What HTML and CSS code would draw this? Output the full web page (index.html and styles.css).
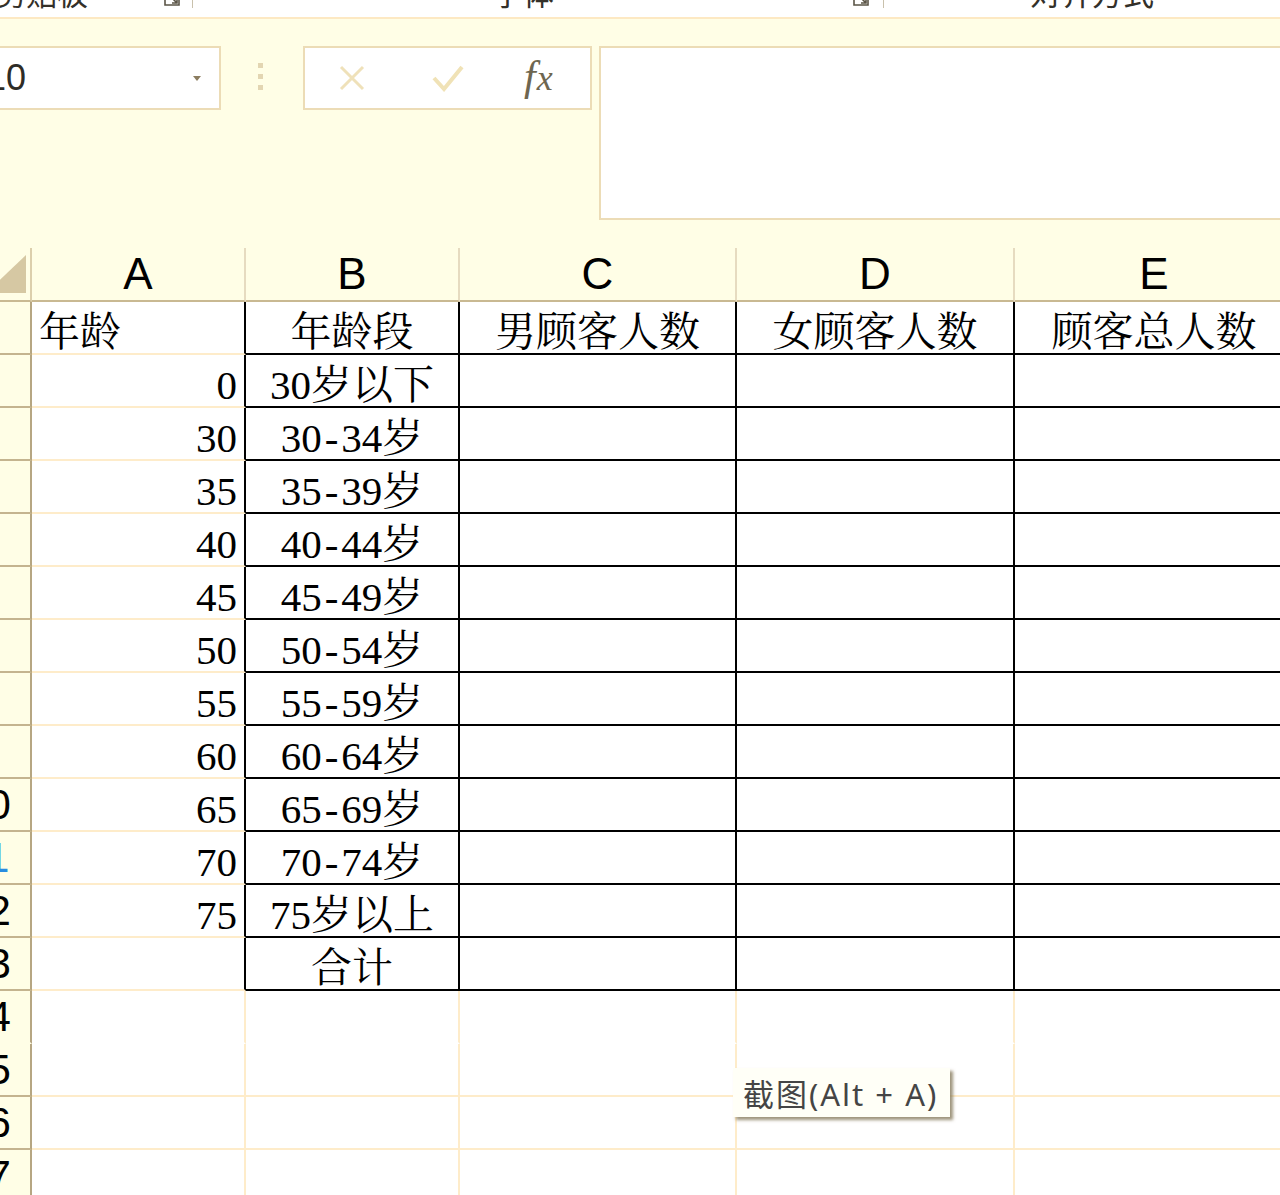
FILE: index.html
```html
<!DOCTYPE html>
<html lang="zh-CN">
<head>
<meta charset="utf-8">
<title>Sheet</title>
<link rel="stylesheet" href="styles.css">
</head>
<body>
<div class="ribbon">
  <span class="glabel g1">剪贴板</span>
  <svg class="launch" viewBox="0 0 18 18"><path d="M2 2V16H16V10M7 7L14 14M9 14H14V9" fill="none" stroke="#5a5446" stroke-width="1.6"/></svg>
  <span class="rsep s1"></span>
  <span class="glabel g2">字体</span>
  <svg class="launch" viewBox="0 0 18 18"><path d="M2 2V16H16V10M7 7L14 14M9 14H14V9" fill="none" stroke="#5a5446" stroke-width="1.6"/></svg>
  <span class="rsep s2"></span>
  <span class="glabel g3">对齐方式</span>
</div>

<div class="toolbar">
  <div class="namebox"><span>10</span><span class="caret"></span></div>
  <div class="dots"><i></i><i></i><i></i></div>
  <div class="fxbox">
    <svg class="ic-x" viewBox="0 0 28 28"><path d="M3 3L25 25M25 3L3 25" stroke="#efe1b9" stroke-width="3" fill="none"/></svg>
    <svg class="ic-ok" viewBox="0 0 32 28"><path d="M2 14L12 25L30 3" stroke="#f0e2b6" stroke-width="4" fill="none"/></svg>
    <span class="fx">f<span class="fx-x">x</span></span>
  </div>
  <div class="formula"></div>
</div>

<div class="sheet">
  <div class="corner"><svg width="40" height="38" viewBox="0 0 40 38"><polygon points="40,0 40,38 0,38" fill="#d6c8a3"/></svg></div>
  <div class="ch">A</div><div class="ch">B</div><div class="ch">C</div><div class="ch">D</div><div class="ch">E</div>

  <div class="rh">1</div><div class="cell lft ta">年龄</div><div class="cell tb">年龄段</div><div class="cell tb">男顾客人数</div><div class="cell tb">女顾客人数</div><div class="cell tb">顾客总人数</div>
  <div class="rh">2</div><div class="cell num ta">0</div><div class="cell tb">30岁以下</div><div class="cell tb"></div><div class="cell tb"></div><div class="cell tb"></div>
  <div class="rh">3</div><div class="cell num ta">30</div><div class="cell tb">30<span class="dash">-</span>34岁</div><div class="cell tb"></div><div class="cell tb"></div><div class="cell tb"></div>
  <div class="rh">4</div><div class="cell num ta">35</div><div class="cell tb">35<span class="dash">-</span>39岁</div><div class="cell tb"></div><div class="cell tb"></div><div class="cell tb"></div>
  <div class="rh">5</div><div class="cell num ta">40</div><div class="cell tb">40<span class="dash">-</span>44岁</div><div class="cell tb"></div><div class="cell tb"></div><div class="cell tb"></div>
  <div class="rh">6</div><div class="cell num ta">45</div><div class="cell tb">45<span class="dash">-</span>49岁</div><div class="cell tb"></div><div class="cell tb"></div><div class="cell tb"></div>
  <div class="rh">7</div><div class="cell num ta">50</div><div class="cell tb">50<span class="dash">-</span>54岁</div><div class="cell tb"></div><div class="cell tb"></div><div class="cell tb"></div>
  <div class="rh">8</div><div class="cell num ta">55</div><div class="cell tb">55<span class="dash">-</span>59岁</div><div class="cell tb"></div><div class="cell tb"></div><div class="cell tb"></div>
  <div class="rh">9</div><div class="cell num ta">60</div><div class="cell tb">60<span class="dash">-</span>64岁</div><div class="cell tb"></div><div class="cell tb"></div><div class="cell tb"></div>
  <div class="rh">10</div><div class="cell num ta">65</div><div class="cell tb">65<span class="dash">-</span>69岁</div><div class="cell tb"></div><div class="cell tb"></div><div class="cell tb"></div>
  <div class="rh sel">11</div><div class="cell num ta">70</div><div class="cell tb">70<span class="dash">-</span>74岁</div><div class="cell tb"></div><div class="cell tb"></div><div class="cell tb"></div>
  <div class="rh">12</div><div class="cell num ta">75</div><div class="cell tb">75岁以上</div><div class="cell tb"></div><div class="cell tb"></div><div class="cell tb"></div>
  <div class="rh">13</div><div class="cell ta"></div><div class="cell tb">合计</div><div class="cell tb"></div><div class="cell tb"></div><div class="cell tb"></div>
  <div class="rh nob">14</div><div class="cell nob"></div><div class="cell nob"></div><div class="cell nob"></div><div class="cell nob"></div><div class="cell nob"></div>
  <div class="rh">15</div><div class="cell"></div><div class="cell"></div><div class="cell"></div><div class="cell"></div><div class="cell"></div>
  <div class="rh">16</div><div class="cell"></div><div class="cell"></div><div class="cell"></div><div class="cell"></div><div class="cell"></div>
  <div class="rh">17</div><div class="cell"></div><div class="cell"></div><div class="cell"></div><div class="cell"></div><div class="cell"></div>
</div>

<div class="tip">截图(Alt + A)</div>
</body>
</html>
```

FILE: styles.css
```css
* { box-sizing: border-box; }
html, body { margin: 0; padding: 0; }
body {
  width: 1280px;
  height: 1195px;
  overflow: hidden;
  position: relative;
  background: #ffffff;
  font-family: "Noto Sans CJK SC", sans-serif;
}

/* ribbon group labels strip (cut off at top) */
.ribbon {
  height: 19px;
  background: #ffffff;
  border-bottom: 2px solid #fde9c3;
  display: flex;
  align-items: flex-start;
  overflow: hidden;
}
.glabel {
  flex: none;
  font-family: "Noto Sans CJK SC", sans-serif;
  font-size: 31px;
  line-height: 31px;
  margin-top: -24px;
  color: #333029;
  white-space: nowrap;
}
.g1 { margin-left: -5px; width: 168px; }
.g2 { margin-left: 299px; width: 360px; }
.g3 { margin-left: 146px; }
.launch { flex: none; width: 18px; height: 18px; margin-top: -11px; }
.rsep { flex: none; width: 1px; height: 8px; background: #c9c1ac; }
.s1 { margin-left: 11px; }
.s2 { margin-left: 13px; }

/* toolbar with name box and formula bar */
.toolbar {
  height: 229px;
  background: #fffee6;
  padding-top: 27px;
  display: flex;
  align-items: flex-start;
}
.namebox {
  flex: none;
  margin-left: -40px;
  width: 261px;
  height: 64px;
  border: 2px solid #ecdcb6;
  background: #ffffff;
  display: flex;
  align-items: center;
  justify-content: space-between;
  padding: 0 18px 0 24px;
  font-family: "Liberation Sans", sans-serif;
  font-size: 36px;
  color: #2e2c26;
}
.caret {
  width: 0;
  height: 0;
  border-left: 4px solid transparent;
  border-right: 4px solid transparent;
  border-top: 5px solid #8b7d60;
}
.dots {
  flex: none;
  margin-left: 37px;
  margin-top: 17px;
  display: flex;
  flex-direction: column;
  gap: 6px;
}
.dots i { display: block; width: 5px; height: 5px; background: #e3d6b2; }
.fxbox {
  flex: none;
  margin-left: 40px;
  width: 289px;
  height: 64px;
  border: 2px solid #ecdcb6;
  background: #ffffff;
  display: flex;
  align-items: center;
  padding-left: 33px;
}
.ic-x { width: 28px; height: 28px; flex: none; }
.ic-ok { width: 32px; height: 28px; flex: none; margin-left: 66px; }
.fx {
  margin-left: 60px;
  font-family: "Liberation Serif", serif;
  font-style: italic;
  font-size: 42px;
  line-height: 1;
  color: #6e6650;
  margin-top: -4px;
}
.fx-x { font-size: 36px; margin-left: 1px; }
.formula {
  flex: none;
  margin-left: 7px;
  width: 700px;
  height: 174px;
  border: 2px solid #ecdcb6;
  border-right: none;
  background: #ffffff;
}

/* sheet grid */
.sheet {
  display: grid;
  grid-template-columns: 83px 214px 214px 277px 278px 280px;
  grid-template-rows: 54px repeat(17, 53px);
  margin-left: -51px;
  width: 1346px;
}
.corner {
  background: #fffee6;
  border-right: 2px solid #dccfac;
  border-bottom: 2px solid #c9b992;
  display: flex;
  justify-content: flex-end;
  align-items: flex-end;
  padding: 0 4px 7px 0;
  overflow: hidden;
}
.ch {
  background: #fffee6;
  border-right: 2px solid #e6dbc0;
  border-bottom: 2px solid #c9b992;
  display: flex;
  align-items: center;
  justify-content: center;
  font-family: "Liberation Sans", sans-serif;
  font-size: 44px;
  line-height: 1;
  color: #000;
}
.rh {
  background: #fffee6;
  border-right: 2px solid #b6a682;
  border-bottom: 2px solid #c4b48f;
  display: flex;
  align-items: center;
  justify-content: center;
  padding-right: 4px;
  font-family: "Liberation Sans", sans-serif;
  font-size: 42px;
  line-height: 1;
  color: #000;
  overflow: hidden;
}
.rh.sel { color: #2a8de0; }
.rh.nob { border-bottom-color: #fffee6; }
.cell {
  border-right: 2px solid #feecca;
  border-bottom: 2px solid #feecca;
  display: flex;
  align-items: flex-end;
  justify-content: center;
  font-family: "Liberation Serif", "Noto Serif CJK SC", "Noto Sans CJK SC", serif;
  font-size: 41px;
  line-height: 41px;
  color: #000;
  white-space: nowrap;
  overflow: hidden;
}
.dash { padding: 0 3px; }
.cell.num { justify-content: flex-end; padding-right: 7px; }
.cell.lft { justify-content: flex-start; padding-left: 7px; }
.cell.ta { border-right-color: #000; }
.cell.tb { border-right-color: #000; border-bottom-color: #000; }
.cell.nob { border-bottom-color: #ffffff; }

/* screenshot tooltip */
.tip {
  position: absolute;
  left: 733px;
  top: 1068px;
  height: 49px;
  padding: 0 12px 0 10px;
  background: #fffff7;
  box-shadow: 3px 3px 3px rgba(125, 112, 80, 0.75);
  font-family: "Noto Sans", "Noto Sans CJK SC", sans-serif;
  font-size: 31px;
  letter-spacing: 2px;
  color: #454545;
  display: flex;
  align-items: center;
  white-space: nowrap;
}
```
